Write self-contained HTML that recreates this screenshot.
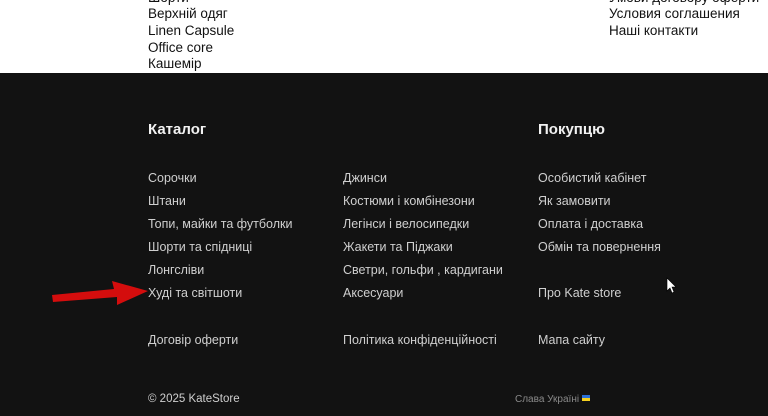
<!DOCTYPE html>
<html><head><meta charset="utf-8"><style>
*{margin:0;padding:0;box-sizing:border-box}
body{width:768px;height:416px;overflow:hidden;background:#fff;font-family:"Liberation Sans",sans-serif;position:relative}
.t{position:absolute;font-family:"Liberation Sans Narrow","Liberation Sans",sans-serif;font-size:13.5px;color:#111;line-height:16px;white-space:nowrap}
.dark{position:absolute;left:0;top:73px;width:768px;height:343px;background:#121212}
.a{position:absolute;font-size:12.5px;color:#cfcfcf;line-height:16px;white-space:nowrap}
.h{position:absolute;font-size:15px;color:#f2f2f2;line-height:18px;font-weight:bold}
</style></head><body>
<div class="t" style="left:148px;top:-10px">Шорти</div>
<div class="t" style="left:148px;top:6px">Верхній одяг</div>
<div class="t" style="left:148px;top:23px">Linen Capsule</div>
<div class="t" style="left:148px;top:40px">Office core</div>
<div class="t" style="left:148px;top:56px">Кашемір</div>
<div class="t" style="left:609px;top:-10px">Умови договору оферти</div>
<div class="t" style="left:609px;top:6px">Условия соглашения</div>
<div class="t" style="left:609px;top:23px">Наші контакти</div>
<div class="dark"></div>
<div class="h" style="left:148px;top:121px">Каталог</div>
<div class="h" style="left:538px;top:121px">Покупцю</div>
<div class="a" style="left:148px;top:170px">Сорочки</div>
<div class="a" style="left:148px;top:193px">Штани</div>
<div class="a" style="left:148px;top:216px">Топи, майки та футболки</div>
<div class="a" style="left:148px;top:239px">Шорти та спідниці</div>
<div class="a" style="left:148px;top:262px">Лонгсліви</div>
<div class="a" style="left:148px;top:285px">Худі та світшоти</div>
<div class="a" style="left:343px;top:170px">Джинси</div>
<div class="a" style="left:343px;top:193px">Костюми і комбінезони</div>
<div class="a" style="left:343px;top:216px">Легінси і велосипедки</div>
<div class="a" style="left:343px;top:239px">Жакети та Піджаки</div>
<div class="a" style="left:343px;top:262px">Светри, гольфи , кардигани</div>
<div class="a" style="left:343px;top:285px">Аксесуари</div>
<div class="a" style="left:538px;top:170px">Особистий кабінет</div>
<div class="a" style="left:538px;top:193px">Як замовити</div>
<div class="a" style="left:538px;top:216px">Оплата і доставка</div>
<div class="a" style="left:538px;top:239px">Обмін та повернення</div>
<div class="a" style="left:538px;top:285px">Про Kate store</div>
<div class="a" style="left:148px;top:332px">Договір оферти</div>
<div class="a" style="left:343px;top:332px">Політика конфіденційності</div>
<div class="a" style="left:538px;top:332px">Мапа сайту</div>
<div class="a" style="left:148px;top:391px;font-size:11.5px">© 2025 KateStore</div>
<div class="a" style="left:515px;top:392px;font-size:10px;color:#8a8a8a">Слава Україні <span style="display:inline-block;width:8px;height:6px;background:linear-gradient(#2a6fd6 50%,#f5d020 50%);vertical-align:1px"></span></div>
<svg style="position:absolute;left:0;top:0" width="768" height="416">
<polygon points="52,295 114,289 112,281 148,291 117,305 117,297 53,302" fill="#d40d0d"/>
<path d="M667 278 L667 291 L670 288 L672 293 L674 292 L672 287 L676 287 Z" fill="#fff" stroke="#000" stroke-width="0.6"/>
</svg>
</body></html>
